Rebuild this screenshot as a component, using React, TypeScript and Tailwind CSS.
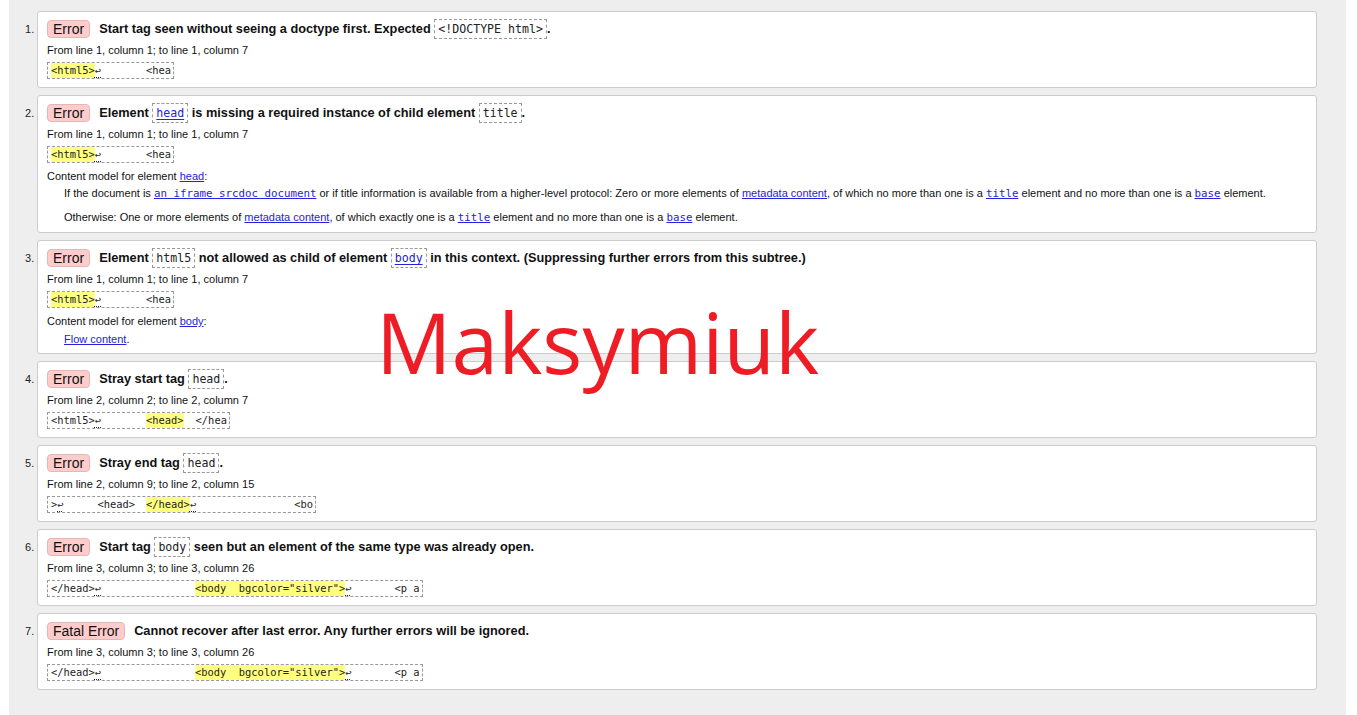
import React from 'react';

type Seg = { t: string; hl?: boolean; ret?: boolean; gap?: number };

const sans = "font-['Liberation_Sans',Arial,sans-serif]";
const mono = "font-['DejaVu_Sans_Mono',monospace]";

// small pieces
const Code = ({ children, link }: { children: React.ReactNode; link?: boolean }) => (
  <code
    className={`inline-block border border-dashed border-[#999] px-[3px] h-[20px] leading-[18px] align-middle text-[11.6px] font-normal ${mono} ${
      link ? 'text-[#2323d8] underline underline-offset-2' : 'text-[#222]'
    }`}
  >
    {children}
  </code>
);

const A = ({ children, code }: { children: React.ReactNode; code?: boolean }) => (
  <span className={`text-[#2323d8] underline ${code ? `${mono} text-[10.8px] leading-none` : ''}`}>{children}</span>
);

const Extract = ({ segs }: { segs: Seg[] }) => (
  <div
    className={`inline-flex h-[17px] items-center whitespace-pre border border-dashed border-[#999] pl-[3px] pr-[2px] text-[10.4px] text-[#222] ${mono}`}
  >
    {segs.map((s, i) =>
      s.gap ? (
        <span key={i} className="inline-block" style={{ width: s.gap }} />
      ) : s.ret ? (
        <span key={i} className="underline decoration-dotted underline-offset-[3px]">
          ↩
        </span>
      ) : (
        <span key={i} className={s.hl ? 'bg-[#ffff80]' : ''}>
          {s.t}
        </span>
      )
    )}
  </div>
);

const html5Extract: Seg[] = [{ t: '<html5>', hl: true }, { t: '', ret: true }, { t: '', gap: 45 }, { t: '<hea' }];
const bodyExtract: Seg[] = [
  { t: '</head>' },
  { t: '', ret: true },
  { t: '', gap: 94 },
  { t: '<body  bgcolor="silver">', hl: true },
  { t: '', ret: true },
  { t: '', gap: 43 },
  { t: '<p a' },
];

type Item = {
  kind: string;
  title: React.ReactNode;
  from: string;
  extract: Seg[];
  extra?: React.ReactNode;
};

const items: Item[] = [
  {
    kind: 'Error',
    title: (
      <>
        Start tag seen without seeing a doctype first. Expected <Code>{'<!DOCTYPE html>'}</Code>.
      </>
    ),
    from: 'From line 1, column 1; to line 1, column 7',
    extract: html5Extract,
  },
  {
    kind: 'Error',
    title: (
      <>
        Element <Code link>head</Code> is missing a required instance of child element <Code>title</Code>.
      </>
    ),
    from: 'From line 1, column 1; to line 1, column 7',
    extract: html5Extract,
    extra: (
      <>
        <p className="mt-[6px] leading-[14px]">
          Content model for element <A>head</A>:
        </p>
        <p className="mt-[3px] pl-[17px] leading-[14px]">
          If the document is <A code>an iframe srcdoc document</A> or if title information is available from a
          higher-level protocol: Zero or more elements of <A>metadata content</A>, of which no more than one is a{' '}
          <A code>title</A> element and no more than one is a <A code>base</A> element.
        </p>
        <p className="mt-[10px] pl-[17px] leading-[14px]">
          Otherwise: One or more elements of <A>metadata content</A>, of which exactly one is a <A code>title</A>{' '}
          element and no more than one is a <A code>base</A> element.
        </p>
      </>
    ),
  },
  {
    kind: 'Error',
    title: (
      <>
        Element <Code>html5</Code> not allowed as child of element <Code link>body</Code> in this context. (Suppressing
        further errors from this subtree.)
      </>
    ),
    from: 'From line 1, column 1; to line 1, column 7',
    extract: html5Extract,
    extra: (
      <>
        <p className="mt-[6px] leading-[14px]">
          Content model for element <A>body</A>:
        </p>
        <p className="mt-[4px] pl-[17px] leading-[14px] mb-[-1px]">
          <A>Flow content</A>.
        </p>
      </>
    ),
  },
  {
    kind: 'Error',
    title: (
      <>
        Stray start tag <Code>head</Code>.
      </>
    ),
    from: 'From line 2, column 2; to line 2, column 7',
    extract: [
      { t: '<html5>' },
      { t: '', ret: true },
      { t: '', gap: 45 },
      { t: '<head>', hl: true },
      { t: '', gap: 12 },
      { t: '</hea' },
    ],
  },
  {
    kind: 'Error',
    title: (
      <>
        Stray end tag <Code>head</Code>.
      </>
    ),
    from: 'From line 2, column 9; to line 2, column 15',
    extract: [
      { t: '>' },
      { t: '', ret: true },
      { t: '', gap: 34 },
      { t: '<head>' },
      { t: '', gap: 11 },
      { t: '</head>', hl: true },
      { t: '', ret: true },
      { t: '', gap: 98 },
      { t: '<bo' },
    ],
  },
  {
    kind: 'Error',
    title: (
      <>
        Start tag <Code>body</Code> seen but an element of the same type was already open.
      </>
    ),
    from: 'From line 3, column 3; to line 3, column 26',
    extract: bodyExtract,
  },
  {
    kind: 'Fatal Error',
    title: <>Cannot recover after last error. Any further errors will be ignored.</>,
    from: 'From line 3, column 3; to line 3, column 26',
    extract: bodyExtract,
  },
];

export default function App() {
  return (
    <div className={`relative min-h-screen bg-white ${sans}`}>
      <div className="ml-[9px] w-[1337px] bg-[#eeeeee] pt-[11px] pb-[25px] pl-[28px] pr-[29px]">
        <ol className="flex flex-col gap-[7px]">
          {items.map((it, i) => (
            <li key={i} className="relative">
              <span className="absolute left-[-12px] top-[11px] text-[11px] leading-[14px] text-[#222]">{i + 1}.</span>
              <div className="rounded-[3px] border border-[#cccccc] bg-white px-[9px] pt-[7px] pb-[8px] text-[11px] text-[#111]">
                <div className="flex h-[20px] items-center">
                  <span className="inline-flex h-[18px] items-center rounded-[4px] border border-[#e6b6b6] bg-[#fcc] px-[5px] text-[14px] text-[#111]">
                    {it.kind}
                  </span>
                  <span className="ml-[9px] whitespace-nowrap text-[12.75px] font-bold text-[#111]">{it.title}</span>
                </div>
                <p className="mt-[4px] leading-[14px]">{it.from}</p>
                <div className="mt-[5px] flex">
                  <Extract segs={it.extract} />
                </div>
                {it.extra}
              </div>
            </li>
          ))}
        </ol>
      </div>
      <div className="pointer-events-none absolute left-[376px] top-[300px] font-['Open_Sans',sans-serif] text-[84px] leading-none text-[#ee1c25]">
        Maksymiuk
      </div>
    </div>
  );
}
